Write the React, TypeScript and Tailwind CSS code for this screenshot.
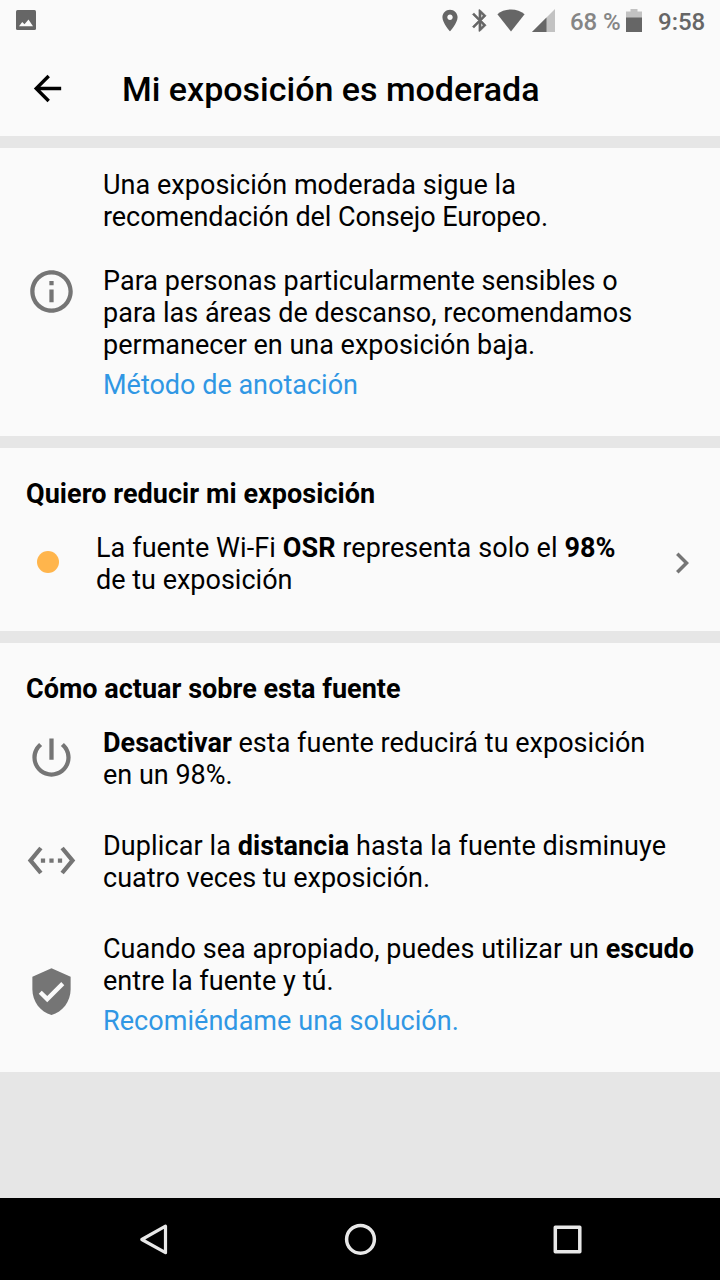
import type { ReactNode } from "react";

function Glyph({ d, className }: { d: string; className: string }) {
  return (
    <svg viewBox="0 0 24 24" className={`shrink-0 ${className}`} fill="currentColor">
      <path d={d} />
    </svg>
  );
}

const ICONS = {
  info: "M11 17h2v-6h-2v6zm1-15C6.48 2 2 6.48 2 12s4.48 10 10 10 10-4.48 10-10S17.52 2 12 2zm0 18c-4.41 0-8-3.59-8-8s3.59-8 8-8 8 3.59 8 8-3.59 8-8 8zM11 9h2V7h-2v2z",
  power:
    "M13 3h-2v10h2V3zm4.83 2.17l-1.42 1.42C17.99 7.86 19 9.81 19 12c0 3.87-3.13 7-7 7s-7-3.13-7-7c0-2.19 1.01-4.14 2.58-5.42L6.17 5.17C4.23 6.82 3 9.26 3 12c0 4.97 4.03 9 9 9s9-4.03 9-9c0-2.74-1.23-5.18-3.17-6.83z",
  distance:
    "M7.77 6.76L6.23 5.48.82 12l5.41 6.52 1.54-1.28L3.42 12l4.35-5.24zM7 13h2v-2H7v2zm10-2h-2v2h2v-2zm-6 2h2v-2h-2v2zm6.77-7.52l-1.54 1.28L20.58 12l-4.35 5.24 1.54 1.28L23.18 12l-5.41-6.52z",
  shield:
    "M12 1L3 5v6c0 5.55 3.84 10.74 9 12 5.16-1.26 9-6.45 9-12V5l-9-4zm-2 16l-4-4 1.41-1.41L10 14.17l6.59-6.59L18 9l-8 8z",
  back: "M20 11H7.83l5.59-5.59L12 4l-8 8 8 8 1.41-1.41L7.83 13H20v-2z",
  chevron: "M10 6L8.59 7.41 13.17 12l-4.58 4.59L10 18l6-6z",
  place:
    "M12 2C8.13 2 5 5.13 5 9c0 5.25 7 13 7 13s7-7.75 7-13c0-3.87-3.13-7-7-7zm0 9.5c-1.38 0-2.5-1.12-2.5-2.5s1.12-2.5 2.5-2.5 2.5 1.12 2.5 2.5-1.12 2.5-2.5 2.5z",
  bluetooth:
    "M17.71 7.71L12 2h-1v7.59L6.41 5 5 6.41 10.59 12 5 17.59 6.41 19 11 14.41V22h1l5.71-5.71-4.3-4.29 4.3-4.29zM13 5.83l1.88 1.88L13 9.59V5.83zm1.88 10.46L13 18.17v-3.76l1.88 1.88z",
};

function StatusBar() {
  return (
    <div className="flex h-10 items-center text-[#666]">
      <svg viewBox="0 0 20 20" className="ml-4 h-5 w-5 shrink-0">
        <rect width="20" height="20" rx="1.500" fill="#666" />
        <path d="M3 16.200 L6.200 12 L8.500 14.300 L12.500 9.500 L17 16.200 Z" fill="#fafafa" />
      </svg>
      <Glyph d={ICONS.place} className="ml-[401px] h-[27px] w-[26px]" />
      <Glyph d={ICONS.bluetooth} className="ml-[3.500px] h-[27px] w-[26px] stroke-current [stroke-width:0.5]" />
      <svg viewBox="0 0 28 23" className="ml-[4.500px] h-[23px] w-7 shrink-0" fill="currentColor">
        <path d="M14 22.500 L.4 5.300 C4 2.300 8.700 .6 14 .6 S24 2.300 27.600 5.300 Z" />
      </svg>
      <svg viewBox="0 0 23 23" className="ml-[6.500px] h-[23px] w-[23px] shrink-0">
        <path d="M0 23 L23 0 V23 Z" fill="#c2c2c2" />
        <path d="M0 23 L14.500 8.500 V23 Z" fill="#666" />
      </svg>
      <span className="ml-[15.500px] w-[51px] pt-[3px] text-[24px] leading-[28px] font-medium tracking-[-0.1px] whitespace-nowrap text-[#858585]">
        68 %
      </span>
      <svg viewBox="0 0 16 23" className="ml-[5px] h-[23px] w-4 shrink-0">
        <path d="M0 2.500 H4.500 V0 H11.500 V2.500 H16 V23 H0 Z" fill="#c2c2c2" />
        <path d="M0 8.500 H16 V23 H0 Z" fill="#666" />
      </svg>
      <span className="ml-4 pt-[3px] text-[24px] leading-[28px] font-medium whitespace-nowrap">9:58</span>
    </div>
  );
}

function Row({ icon, low, children }: { icon: string; low?: boolean; children: ReactNode }) {
  return (
    <div className="flex items-center">
      <Glyph
        d={icon}
        className={`ml-[26px] h-[51px] w-[51px] text-[#757575] ${low ? "mt-3" : "mb-[3px]"}`}
      />
      <div className="ml-[26px] whitespace-nowrap">{children}</div>
    </div>
  );
}

export default function App() {
  return (
    <div className="flex h-[1280px] w-[720px] flex-col overflow-hidden bg-[#e6e6e6] font-['Roboto',sans-serif] text-[27px] leading-[32px] text-black">
      <header className="h-[136px] bg-[#fafafa]">
        <StatusBar />
        <div className="flex h-[98px] items-center">
          <Glyph d={ICONS.back} className="mb-[2px] ml-[27px] h-[41px] w-[41px]" />
          <h1 className="ml-[54px] text-[34px] leading-10 font-medium whitespace-nowrap">
            Mi exposición es moderada
          </h1>
        </div>
      </header>

      <section className="mt-3 h-[288px] bg-[#fafafa] pt-[21px]">
        <Row icon={ICONS.info} low>
          <p>
            <span className="tracking-[0.04px]">Una exposición moderada sigue la</span>
            <br />
            <span className="tracking-[-0.06px]">recomendación del Consejo Europeo.</span>
          </p>
          <p className="mt-8">
            <span className="tracking-[0.05px]">Para personas particularmente sensibles o</span>
            <br />
            <span className="tracking-[0.02px]">para las áreas de descanso, recomendamos</span>
            <br />
            permanecer en una exposición baja.
          </p>
          <a className="mt-2 block text-[#3097e4]">Método de anotación</a>
        </Row>
      </section>

      <section className="mt-3 h-[183px] bg-[#fafafa] pt-[30px]">
        <h2 className="pl-[26px] font-bold tracking-[0.05px]">Quiero reducir mi exposición</h2>
        <div className="mt-[22px] flex items-center">
          <span className="mb-1 ml-[37px] h-[22px] w-[22px] rounded-full bg-[#ffb54c]" />
          <p className="ml-[37px] flex-1 whitespace-nowrap">
            <span className="tracking-[0.08px]">
              La fuente Wi-Fi <b>OSR</b> representa solo el <b>98%</b>
            </span>
            <br />
            de tu exposición
          </p>
          <Glyph d={ICONS.chevron} className="mr-[17px] mb-[3px] h-[42px] w-[42px] text-[#757575]" />
        </div>
      </section>

      <section className="mt-3 h-[429px] bg-[#fafafa] pt-[30px]">
        <h2 className="pl-[26px] font-bold tracking-[0.01px]">Cómo actuar sobre esta fuente</h2>
        <div className="mt-[22px] flex flex-col gap-[39px]">
          <Row icon={ICONS.power}>
            <span className="tracking-[0.02px]">
              <b>Desactivar</b> esta fuente reducirá tu exposición
            </span>
            <br />
            en un 98%.
          </Row>
          <Row icon={ICONS.distance}>
            <span className="tracking-[0.1px]">
              Duplicar la <b>distancia</b> hasta la fuente disminuye
            </span>
            <br />
            cuatro veces tu exposición.
          </Row>
          <Row icon={ICONS.shield} low>
            <span className="tracking-[0.05px]">
              Cuando sea apropiado, puedes utilizar un <b>escudo</b>
            </span>
            <br />
            <span className="tracking-[0.05px]">entre la fuente y tú.</span>
            <a className="mt-2 block tracking-[0.05px] text-[#3097e4]">Recomiéndame una solución.</a>
          </Row>
        </div>
      </section>

      <nav className="mt-auto flex h-[82px] items-center bg-black">
        <svg viewBox="0 0 34 34" className="ml-[137px] h-[34px] w-[34px]" fill="none" stroke="#e8e8e8" strokeWidth="3.200" strokeLinejoin="round">
          <path d="M28.500 4.200 V30.700 L4.800 17.500 Z" />
        </svg>
        <svg viewBox="0 0 34 34" className="ml-[173px] h-[34px] w-[34px]" fill="none" stroke="#e8e8e8" strokeWidth="3.500">
          <circle cx="16.500" cy="17.300" r="13.900" />
        </svg>
        <svg viewBox="0 0 34 34" className="ml-[173px] h-[34px] w-[34px]" fill="none" stroke="#e8e8e8" strokeWidth="3.500" strokeLinejoin="round">
          <rect x="4.300" y="5.300" width="24.500" height="24.500" />
        </svg>
      </nav>
    </div>
  );
}
